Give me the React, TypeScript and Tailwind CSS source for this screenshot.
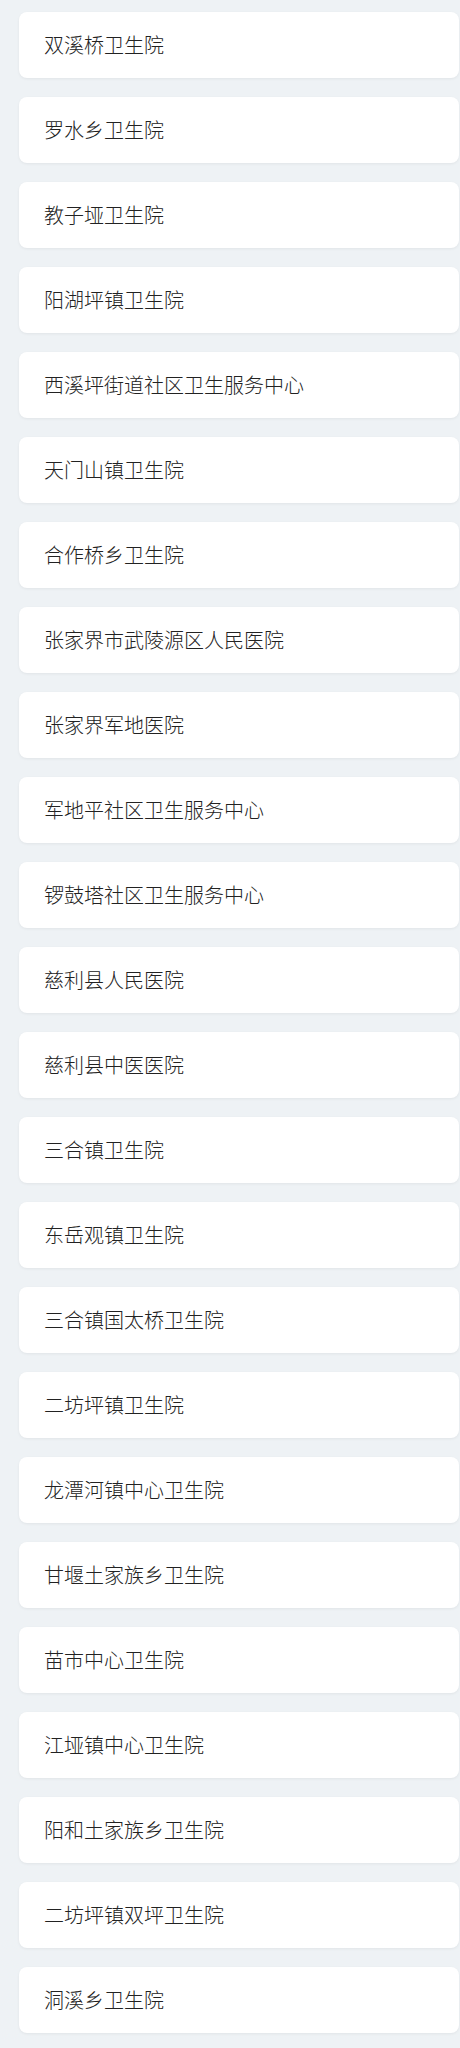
const hospitals = [
  '双溪桥卫生院',
  '罗水乡卫生院',
  '教子垭卫生院',
  '阳湖坪镇卫生院',
  '西溪坪街道社区卫生服务中心',
  '天门山镇卫生院',
  '合作桥乡卫生院',
  '张家界市武陵源区人民医院',
  '张家界军地医院',
  '军地平社区卫生服务中心',
  '锣鼓塔社区卫生服务中心',
  '慈利县人民医院',
  '慈利县中医医院',
  '三合镇卫生院',
  '东岳观镇卫生院',
  '三合镇国太桥卫生院',
  '二坊坪镇卫生院',
  '龙潭河镇中心卫生院',
  '甘堰土家族乡卫生院',
  '苗市中心卫生院',
  '江垭镇中心卫生院',
  '阳和土家族乡卫生院',
  '二坊坪镇双坪卫生院',
  '洞溪乡卫生院',
]

export default function App() {
  return (
    <div
      className="min-h-[2048px] bg-[#eef2f5] pt-[12px] pl-[19px] pr-[1px] pb-[15px]"
      style={{ fontFamily: '"Microsoft YaHei", "Noto Sans CJK SC", sans-serif' }}
    >
      <ul className="flex flex-col gap-[19px]">
        {hospitals.map((name) => (
          <li
            key={name}
            className="flex h-[66px] items-center rounded-lg bg-white pl-[25px] text-[20px] font-light text-[#222222] shadow-[0_1px_3px_rgba(0,0,0,0.06)]"
          >
            {name}
          </li>
        ))}
      </ul>
    </div>
  )
}
